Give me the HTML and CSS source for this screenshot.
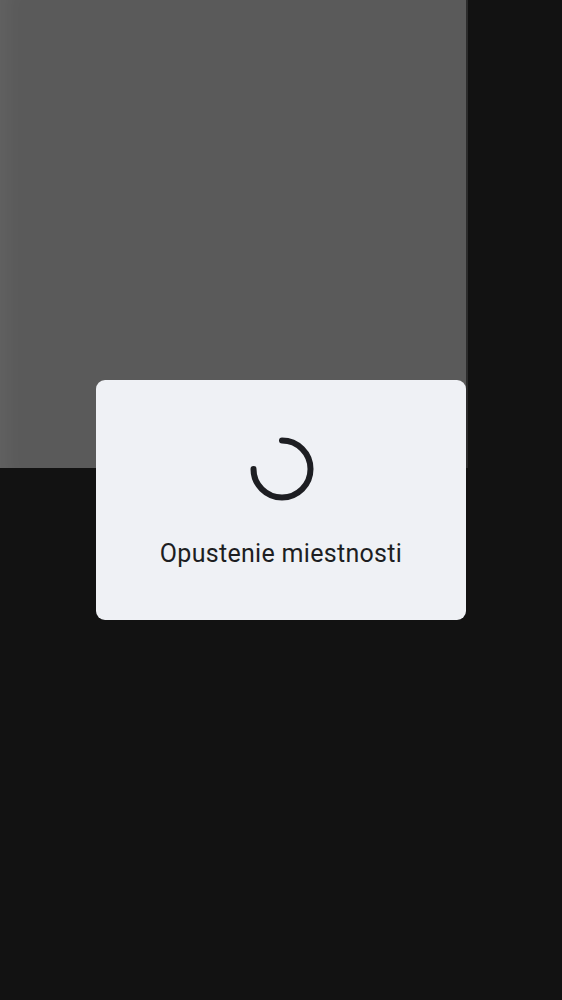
FILE: index.html
```html
<!DOCTYPE html>
<html lang="sk">
<head>
<meta charset="utf-8">
<link rel="stylesheet" href="styles.css">
</head>
<body>
<div class="screen">
  <div class="video"></div>
  <div class="dialog">
    <svg class="spinner" width="66" height="66" viewBox="0 0 66 66">
      <path d="M33 4.5 A28.5 28.5 0 1 1 4.5 33" fill="none" stroke="#1d1e22" stroke-width="6" stroke-linecap="round"/>
    </svg>
    <div class="label">Opustenie miestnosti</div>
  </div>
</div>
</body>
</html>
```
FILE: styles.css
```css
html, body {
  margin: 0;
  padding: 0;
  background: #121212;
}
.screen {
  position: relative;
  width: 562px;
  height: 1000px;
  overflow: hidden;
}
.video {
  width: 466px;
  height: 468px;
  background: #5a5a5a;
  border-right: 2px solid #2c2c2c;
  box-shadow: inset 22px 0 20px -14px rgba(255,255,255,0.05);
}
.dialog {
  position: absolute;
  left: 96px;
  top: 380px;
  width: 370px;
  height: 240px;
  box-sizing: border-box;
  background: #eff1f5;
  border-radius: 9px;
  display: flex;
  flex-direction: column;
  align-items: center;
  padding-top: 56px;
}
.spinner {
  display: block;
  margin-left: 1px;
}
.label {
  margin-top: 37px;
  font-family: Roboto, "Noto Sans", sans-serif;
  font-size: 25px;
  line-height: 30px;
  color: #1d1e22;
  letter-spacing: 0.3px;
}
```
